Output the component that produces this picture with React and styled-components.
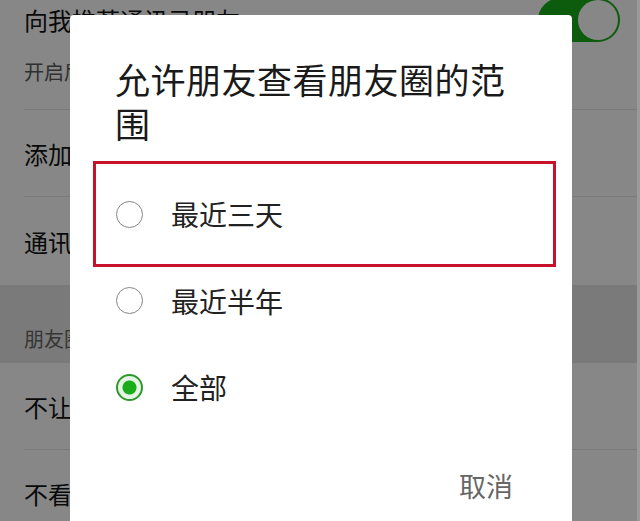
import styled, { createGlobalStyle } from "styled-components";

const GlobalStyle = createGlobalStyle`
  html, body {
    margin: 0;
    padding: 0;
    background: #fff;
  }
  body {
    font-family: "Noto Sans CJK SC", "Noto Sans", sans-serif;
  }
`;

const Screen = styled.div`
  position: relative;
  width: 640px;
  height: 521px;
  overflow: hidden;
  background: #fff;
`;

const SettingsList = styled.div`
  display: flex;
  flex-direction: column;
`;

const ToggleRow = styled.div`
  display: flex;
  justify-content: space-between;
  align-items: flex-start;
  height: 110px;
  margin-left: 24px;
  padding-right: 20px;
  border-bottom: 1px solid #e6e6e6;
  box-sizing: border-box;
`;

const RowTitle = styled.div`
  font-size: 24px;
  line-height: 32px;
  color: #111;
  margin-top: ${(p) => p.$top || 0}px;
`;

const RowSub = styled.div`
  font-size: 20px;
  line-height: 28px;
  color: #5a5a5a;
  margin-top: 22px;
`;

const Toggle = styled.div`
  position: relative;
  width: 82px;
  height: 44px;
  margin-top: -2px;
  border-radius: 22px;
  background: #1aad19;
`;

const Knob = styled.div`
  position: absolute;
  right: 2px;
  top: 2px;
  width: 40px;
  height: 40px;
  border-radius: 50%;
  background: #fff;
`;

const Row = styled.div`
  display: flex;
  align-items: center;
  height: ${(p) => p.$h || 87}px;
  margin-left: 24px;
  font-size: 24px;
  color: #111;
  border-bottom: ${(p) => (p.$last ? "none" : "1px solid #e6e6e6")};
  box-sizing: border-box;
`;

const SectionHeader = styled.div`
  height: 78px;
  padding: 40px 0 0 24px;
  box-sizing: border-box;
  background: #e6e6e6;
  font-size: 20px;
  line-height: 28px;
  color: #666;
`;

const Mask = styled.div`
  position: absolute;
  inset: 0;
  background: rgba(0, 0, 0, 0.47);
  border-right: 3px solid #9a9a9a;
  box-sizing: border-box;
`;

const Dialog = styled.div`
  position: absolute;
  left: 70px;
  top: 15px;
  width: 502px;
  height: 540px;
  background: #fff;
  border-radius: 4px 4px 0 0;
  padding: 42px 45px 0 45px;
  box-sizing: border-box;
`;

const DialogTitle = styled.div`
  width: 412px;
  font-size: 35px;
  line-height: 44px;
  letter-spacing: 0.5px;
  color: #1a1a1a;
`;

const Options = styled.div`
  display: flex;
  flex-direction: column;
  margin-top: 26px;
`;

const Option = styled.div`
  position: relative;
  display: flex;
  align-items: center;
  gap: 28px;
  height: 86.5px;
  padding-left: 1px;
  font-size: 28px;
  color: #222;
`;

const Highlight = styled.div`
  position: absolute;
  top: -10px;
  bottom: -9px;
  left: -22px;
  right: -29px;
  border: 3px solid #c8122c;
  box-sizing: border-box;
`;

const Radio = styled.span`
  width: 27px;
  height: 27px;
  border-radius: 50%;
  box-sizing: border-box;
  flex-shrink: 0;
  border: ${(p) => (p.$checked ? "2px solid #2b9a2b" : "1.5px solid #858585")};
  background: ${(p) =>
    p.$checked
      ? "radial-gradient(circle, #1aad19 0 6.5px, #e6f4e6 7.5px)"
      : "#fff"};
`;

const Footer = styled.div`
  display: flex;
  justify-content: flex-end;
  padding: 35px 14px 0 0;
`;

const CancelButton = styled.span`
  font-size: 27px;
  line-height: 40px;
  color: #666;
`;

const options = [
  { label: "最近三天", highlighted: true },
  { label: "最近半年" },
  { label: "全部", checked: true },
];

const App = () => {
  return (
    <>
      <GlobalStyle />
      <Screen>
        <SettingsList>
          <ToggleRow>
            <div>
              <RowTitle $top={4}>向我推荐通讯录朋友</RowTitle>
              <RowSub>开启后，为你推荐已经开通微信的手机联系人</RowSub>
            </div>
            <Toggle>
              <Knob />
            </Toggle>
          </ToggleRow>
          <Row>添加我的方式</Row>
          <Row $h={88} $last>
            通讯录黑名单
          </Row>
          <SectionHeader>朋友圈</SectionHeader>
          <Row>不让他(她)看</Row>
          <Row>不看他(她)</Row>
        </SettingsList>
        <Mask />
        <Dialog>
          <DialogTitle>允许朋友查看朋友圈的范围</DialogTitle>
          <Options>
            {options.map((o) => (
              <Option key={o.label}>
                {o.highlighted && <Highlight />}
                <Radio $checked={o.checked} />
                {o.label}
              </Option>
            ))}
          </Options>
          <Footer>
            <CancelButton>取消</CancelButton>
          </Footer>
        </Dialog>
      </Screen>
    </>
  );
};

export default App;
